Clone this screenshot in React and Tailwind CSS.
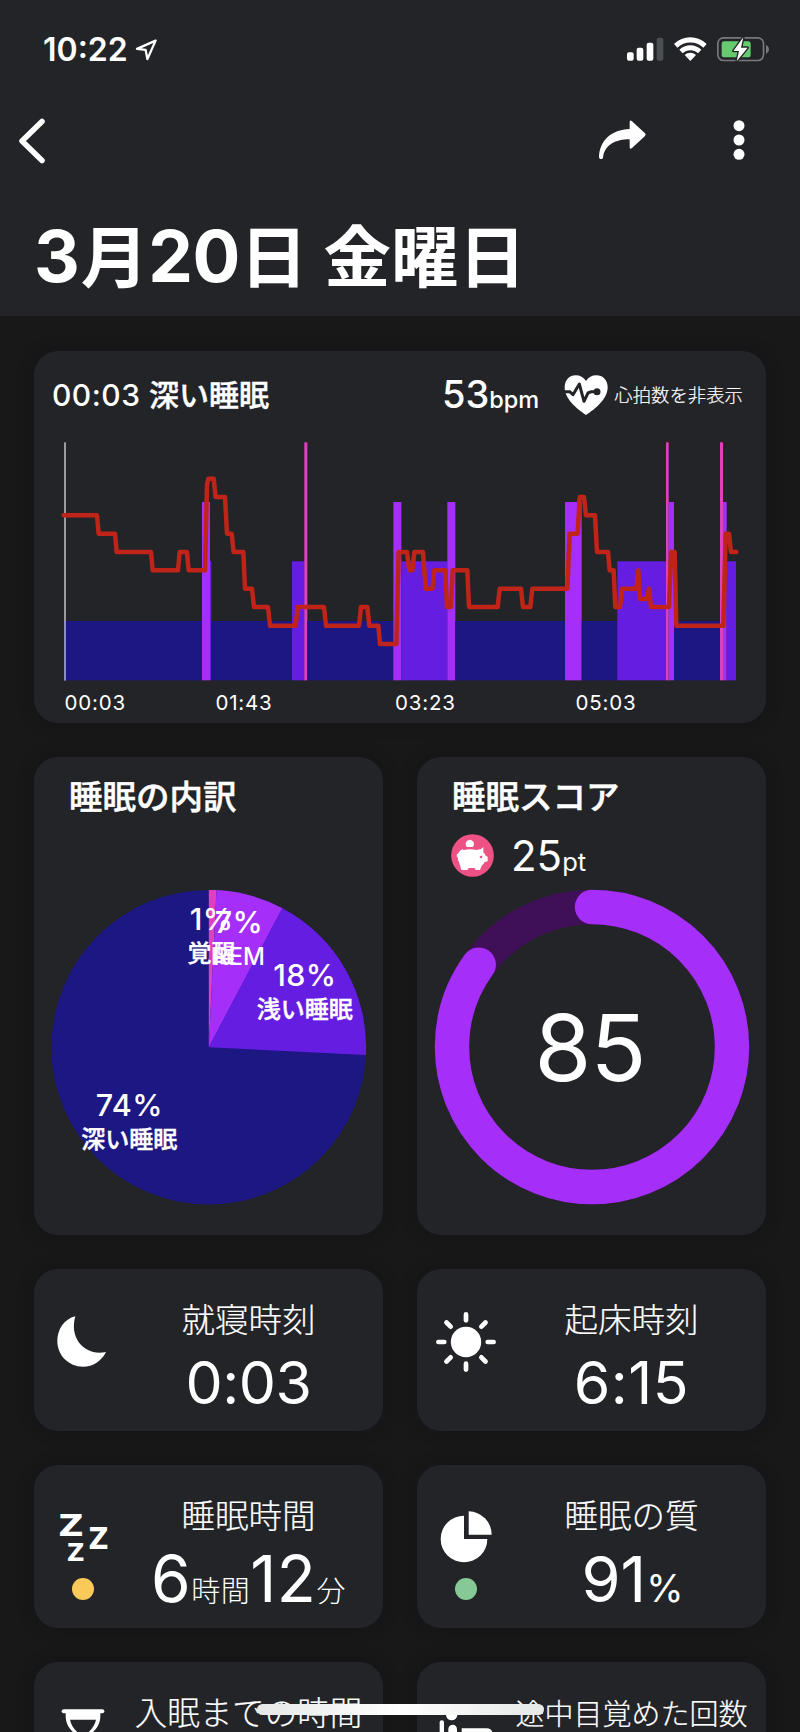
import React from "react";

const FONT = "font-['Inter','Noto_Sans_CJK_JP',sans-serif]";

/* Sleep stage bars: [x, width, stage]. Chart units are a third of a pixel. */
const STAGES = {
  deep: { top: 843, fill: "#1c1782" },
  light: { top: 664, fill: "#661de2" },
  rem: { top: 486, fill: "#a52ff8" },
  awake: { top: 307, fill: "#df40c0" },
};

const BARS = [
  [106, 410, "deep"], [516, 24, "rem"], [540, 4, "light"], [543, 243, "deep"],
  [786, 38, "light"], [823, 9, "awake"], [831, 259, "deep"], [1090, 24, "rem"],
  [1114, 138, "light"], [1252, 24, "rem"], [1275, 330, "deep"], [1605, 50, "rem"],
  [1655, 107, "deep"], [1762, 146, "light"], [1908, 8, "awake"], [1916, 16, "rem"],
  [1932, 138, "deep"], [2070, 9, "awake"], [2079, 11, "rem"], [2090, 28, "light"],
];

const HEART =
  "101,526 201,526 206,581 255,581 260,636 363,636 368,691 444,691 449,636 471,636 476,691 525,691 531,435 535,416 551,416 557,471 585,471 591,581 605,581 611,636 640,636 645,746 666,746 672,801 714,801 720,857 797,857 803,801 882,801 888,857 987,857 993,801 1012,801 1018,857 1045,857 1050,912 1099,912 1106,636 1131,636 1138,691 1147,691 1153,636 1179,636 1187,746 1207,746 1213,691 1246,691 1251,801 1263,801 1268,691 1312,691 1317,801 1403,801 1409,746 1473,746 1479,801 1501,801 1507,746 1612,746 1619,581 1643,581 1649,471 1662,471 1668,526 1695,526 1701,636 1734,636 1739,691 1751,691 1756,801 1770,801 1776,746 1819,746 1825,691 1830,777 1849,777 1857,746 1863,801 1917,801 1923,636 1934,636 1939,857 2080,857 2087,581 2097,581 2103,636 2119,636";

function LocationIcon() {
  return (
    <svg className="h-[24px] w-[24px]" viewBox="134 36 24 24" fill="none">
      <path d="M155.6 39.6 137 47.9l8.6.9 1.8 9.3Z" stroke="#fff" strokeWidth="2.3" strokeLinejoin="round" />
    </svg>
  );
}

function StatusIcons() {
  return (
    <svg className="h-[28px] w-[146px]" viewBox="196 44 438 84">
      <g fill="#fff">
        <rect x="202" y="96" width="20" height="25" rx="6" />
        <rect x="231" y="82" width="20" height="39" rx="6" />
        <rect x="261" y="67" width="20" height="54" rx="6" />
        <rect x="291" y="52" width="20" height="69" rx="6" fill="#4c4f52" />
        <path d="M343 71a70 70 0 0 1 98 0l-10 11a56 56 0 0 0-78 0Z" />
        <path d="M359 88a47 47 0 0 1 66 0l-10 11a33 33 0 0 0-46 0Z" />
        <path d="M375 104a25 25 0 0 1 34 0L392 122Z" />
      </g>
      <rect x="474.500" y="52.500" width="137" height="68" rx="17" fill="none" stroke="#77797c" strokeWidth="5" />
      <path d="M619 74a14 14 0 0 1 0 26Z" fill="#77797c" />
      <rect x="486" y="63" width="87" height="48" rx="8" fill="#66cb6f" />
      <path d="M551 51 521 92h17l-7 31 33-41h-20Z" fill="#fff" stroke="#232428" strokeWidth="8" strokeLinejoin="round" paintOrder="stroke" />
    </svg>
  );
}

function ShareIcon() {
  return (
    <svg className="h-[42px] w-[50px]" viewBox="112 298 150 126" fill="#fff">
      <path d="M207 308q0-9 7-3l39 36q4 4 0 8l-39 36q-7 6-7-3V359c-42 0-75 16-80 55-1 6-12 6-12-2 2-50 37-82 92-84Z" />
    </svg>
  );
}

function MoreIcon() {
  return (
    <svg className="h-[42px] w-[14px]" viewBox="516 298 42 126" fill="#fff">
      <circle cx="537" cy="318" r="16.500" />
      <circle cx="537" cy="361" r="16.500" />
      <circle cx="537" cy="404" r="16.500" />
    </svg>
  );
}

function HeartIcon() {
  return (
    <svg className="h-[42px] w-[44px]" viewBox="493 98 132 126">
      <path d="M559 221C530 202 495 172 495 138c0-22 15-36 33-36 13 0 24 6 31 17 7-11 18-17 31-17 19 0 34 14 34 36 0 34-36 65-65 83Z" fill="#fff" />
      <path d="M492 151h18l10 9 19-32 14 52 12-25 10-4h16" fill="none" stroke="#232428" strokeWidth="9" strokeLinejoin="round" />
      <circle cx="592" cy="151" r="10.500" fill="#232428" />
    </svg>
  );
}

function PiggyBadge() {
  return (
    <svg className="h-[43px] w-[43px]" viewBox="124 252 129 129">
      <circle cx="188.500" cy="316.500" r="64" fill="#ee5183" />
      <path d="M171 291q-6-9 0-17 10-9 19 0 6 8 0 17Z" fill="#fff" />
      <path d="M163 300q18-4 38 0l13-3 7-6v16q6 5 7 10l6 3v14l-9 2q-3 7-9 11l-5 13h-13l-3-6h-18l-3 6h-19l-6-21q-5-7-5-17l-3-3q-1-7 5-9 4-9 12-12Z" fill="#fff" />
      <circle cx="214" cy="321" r="4" fill="#ee5183" />
    </svg>
  );
}

function StageChart() {
  return (
    <svg className="block h-[243px] w-[732px]" viewBox="12 300 2196 729">
      {BARS.map(([x, w, stage]) => (
        <rect key={x} x={x} y={STAGES[stage].top} width={w} height={1021 - STAGES[stage].top} fill={STAGES[stage].fill} />
      ))}
      <rect x="102" y="307" width="6" height="714" fill="#9a9a9f" />
      <rect x="102" y="843" width="6" height="178" fill="#8f8bc4" />
      <polyline points={HEART} fill="none" stroke="#c02418" strokeWidth="13.500" strokeLinejoin="round" strokeLinecap="round" />
    </svg>
  );
}

function PieLabel({ x, y, value, name, stroke = 0.4 }) {
  return (
    <g fill="#fff" textAnchor="middle" fontWeight="500">
      <text x={x} y={y} fontSize="30.500" letterSpacing="0.300">{value}</text>
      <text x={x} y={y + 32} fontSize="24" stroke="#fff" strokeWidth={stroke}>{name}</text>
    </g>
  );
}

function StagePie() {
  const cx = 208.8;
  const cy = 1047.2;
  const r = 157.3;
  const at = (deg) => {
    const a = (deg * Math.PI) / 180;
    return `${cx + r * Math.sin(a)} ${cy - r * Math.cos(a)}`;
  };
  const slice = (from, to) => `M${cx} ${cy}L${at(from)}A${r} ${r} 0 0 1 ${at(to)}Z`;
  return (
    <svg className="mx-auto block h-[320px] w-[320px]" viewBox="49 887 320 320">
      <circle cx={cx} cy={cy} r={r} fill="#1c1782" />
      <path d={slice(0, 2.8)} fill="#df40c0" />
      <path d={slice(2.8, 27.9)} fill="#a52ff8" />
      <path d={slice(27.9, 92.8)} fill="#661de2" />
      <PieLabel x={129.3} y={1116.3} value="74%" name="深い睡眠" />
      <PieLabel x={304.8} y={985.5} value="18%" name="浅い睡眠" />
      <PieLabel x={239} y={933.3} value="7%" name="REM" stroke={0} />
      <PieLabel x={211.6} y={930.3} value="1%" name="覚醒" />
    </svg>
  );
}

function ScoreRing() {
  return (
    <svg className="mx-auto block h-[320px] w-[320px]" viewBox="0 0 320 320">
      <g fill="none" strokeWidth="34.400" transform="rotate(-90 160 160)">
        <circle cx="160" cy="160" r="140" stroke="#3f1058" />
        <circle cx="160" cy="160" r="140" stroke="#a52ff8" strokeLinecap="round" pathLength="100" strokeDasharray="85 100" />
      </g>
      <text x="158" y="194" fontSize="92" letterSpacing="-1" fill="#fff" textAnchor="middle">85</text>
    </svg>
  );
}

function MoonIcon() {
  return (
    <svg className="h-[54px] w-[54px]" viewBox="78 168 162 162">
      <path d="M136 172C102 180 82 212 82 246c0 43 34 77 77 77 30 0 56-17 69-44-60 14-112-38-92-107Z" fill="#fff" />
    </svg>
  );
}

function SunIcon() {
  return (
    <svg className="h-[64px] w-[64px]" viewBox="-32 -32 64 64">
      <circle r="15.200" fill="#fff" />
      {[0, 45, 90, 135, 180, 225, 270, 315].map((deg) => (
        <path key={deg} d="M0-21.700V-27.600" stroke="#fff" strokeWidth="4.700" strokeLinecap="round" transform={`rotate(${deg})`} />
      ))}
    </svg>
  );
}

function SleepIcon() {
  return (
    <svg className="h-[52px] w-[52px] overflow-visible font-['DejaVu_Sans',sans-serif]" viewBox="0 0 52 52" fill="#fff" fontWeight="700">
      <text x="1.500" y="24.800" fontSize="30" textLength="25" lengthAdjust="spacingAndGlyphs">Z</text>
      <text x="31.500" y="37.500" fontSize="30" textLength="20" lengthAdjust="spacingAndGlyphs">Z</text>
      <text x="10" y="50.200" fontSize="24">Z</text>
    </svg>
  );
}

function QualityIcon() {
  return (
    <svg className="h-[52px] w-[52px]" viewBox="91 187 156 156" fill="#fff">
      <path d="M163 201v70h70a70 70 0 1 1-70-70Z" />
      <path d="M177 188a70 70 0 0 1 69 70h-69Z" />
    </svg>
  );
}

function HourglassIcon() {
  return (
    <svg className="h-[52px] w-[44px]" viewBox="94 773 132 156" fill="#fff">
      <rect x="96" y="777" width="128" height="12" rx="6" />
      <rect x="96" y="917" width="128" height="12" rx="6" />
      <path d="M108 786h104v12c0 26-16 44-32 55 16 11 32 29 32 55v12H108v-12c0-26 16-44 32-55-16-11-32-29-32-55Z" />
      <path d="M121 808h78q-4 21-25 40h-28q-21-18-25-40Z" fill="#232428" />
    </svg>
  );
}

function BedIcon() {
  return (
    <svg className="h-[52px] w-[54px]" viewBox="84 778 162 156" fill="#fff">
      <circle cx="122" cy="798" r="17" />
      <rect x="86" y="815" width="13" height="100" rx="6" />
      <path d="M112 842a13 14 0 0 1 26 0v40h-26Z" />
      <path d="M152 839h75q17 0 17 17v26h-92Z" />
    </svg>
  );
}

function Card({ className = "", children }) {
  return (
    <section className={`rounded-[24px] bg-[#232428] shadow-[0_0_14px_rgba(18,14,24,0.55)] ${className}`}>{children}</section>
  );
}

function Tile({ icon, dot, label, labelClass = "text-[33.500px]", children }) {
  return (
    <Card className="flex h-[162.300px] pr-[18px]">
      <div className={`flex w-[98px] shrink-0 flex-col items-center ${dot ? "pt-[46px]" : "justify-center pb-[16px]"}`}>
        {icon}
        {dot && <span className={`mt-[15px] size-[21.500px] shrink-0 rounded-full ${dot}`} />}
      </div>
      <div className="flex w-[233px] flex-col items-center pt-[34px]">
        <div className={`h-[34px] font-light whitespace-nowrap leading-[34px] text-white [-webkit-text-stroke:0.2px] ${labelClass}`}>{label}</div>
        {children}
      </div>
    </Card>
  );
}

export default function App() {
  return (
    <div className={`relative h-[1732px] w-[800px] overflow-hidden bg-[#181818] text-white ${FONT}`}>
      <header className="h-[316px] bg-[#232428]">
        <div className="flex h-[98px] items-center pl-[43px] pr-[29px]">
          <span className="pt-[1px] text-[32px] font-semibold leading-none">10:22</span>
          <span className="ml-[6px]"><LocationIcon /></span>
          <span className="ml-auto"><StatusIcons /></span>
        </div>
        <div className="flex h-[86px] items-center pl-[16px] pr-[54px]">
          <svg className="h-[48px] w-[32px]" viewBox="0 0 32 48" fill="none">
            <path d="M26 4.500 6 24l20 19.500" stroke="#fff" strokeWidth="5.500" strokeLinecap="round" strokeLinejoin="round" />
          </svg>
          <span className="ml-auto pb-[2px]"><ShareIcon /></span>
          <span className="ml-[84px] pb-[2px]"><MoreIcon /></span>
        </div>
        <h1 className="mt-[36px] pl-[34px] text-[67.500px] font-bold leading-[72px] whitespace-nowrap"><span className="text-[71px] tracking-[1px]">3</span>月<span className="text-[71px] tracking-[-0.500px]">20</span>日 金曜日</h1>
      </header>

      <main className="flex flex-col gap-[34px] px-[34px] pt-[34.500px]">
        <Card className="h-[372.500px] overflow-hidden">
          <div className="flex h-[89.500px] items-center pl-[18px] pr-[23px]">
            <span className="text-[30px] font-medium leading-none whitespace-nowrap"><span className="tracking-[0.500px]">00:03 </span><span className="[-webkit-text-stroke:0.4px]">深い睡眠</span></span>
            <span className="ml-auto flex items-baseline pb-[2px] leading-none font-medium">
              <span className="text-[38px]">53</span>
              <span className="text-[23.500px]">bpm</span>
            </span>
            <span className="ml-[25px]"><HeartIcon /></span>
            <span className="ml-[6px] text-[18.400px] font-light leading-none whitespace-nowrap [-webkit-text-stroke:0.2px]">心拍数を非表示</span>
          </div>
          <StageChart />
          <div className="flex pl-[30.500px] pt-[10px] text-[20.500px] leading-[20px] tracking-[0.800px]">
            <span className="w-[151px]">00:03</span>
            <span className="w-[179.500px]">01:43</span>
            <span className="w-[180.500px]">03:23</span>
            <span>05:03</span>
          </div>
        </Card>

        <div className="grid grid-cols-2 gap-[34px]">
          <Card className="h-[478px] pt-[23px]">
            <h2 className="h-[107px] pl-[35px] text-[33.500px] font-medium leading-[34px] [-webkit-text-stroke:0.5px]">睡眠の内訳</h2>
            <StagePie />
          </Card>
          <Card className="h-[478px] pt-[23px]">
            <h2 className="h-[34px] pl-[35px] text-[33.500px] font-medium leading-[34px] [-webkit-text-stroke:0.5px]">睡眠スコア</h2>
            <div className="flex h-[73px] items-start pl-[34px] pt-[20px]">
              <PiggyBadge />
              <span className="ml-[17px] flex items-baseline pt-[1px] leading-[42px]">
                <span className="text-[42px]">25</span>
                <span className="text-[25.500px]">pt</span>
              </span>
            </div>
            <ScoreRing />
          </Card>
        </div>

        <div className="grid grid-cols-2 gap-[34px]">
          <Tile icon={<MoonIcon />} label="就寝時刻">
            <div className="mt-[16px] text-[59px] leading-[60px] tracking-[-0.500px]">0:03</div>
          </Tile>
          <Tile icon={<SunIcon />} label="起床時刻">
            <div className="mt-[16px] text-[59px] leading-[60px] tracking-[0.500px]">6:15</div>
          </Tile>
          <Tile icon={<SleepIcon />} dot="bg-[#f9ca59]" label="睡眠時間">
            <div className="mt-[16px] flex items-baseline text-[64px] leading-[60px] tracking-[0.500px]">
              6<span className="text-[29px] font-light">時間</span>12<span className="text-[29px] font-light">分</span>
            </div>
          </Tile>
          <Tile icon={<QualityIcon />} dot="bg-[#86c997]" label="睡眠の質">
            <div className="mt-[16px] flex items-baseline pl-[2px] text-[63px] leading-[60px]">
              91<span className="text-[38px]">%</span>
            </div>
          </Tile>
          <Tile icon={<HourglassIcon />} dot="bg-[#86c997]" label="入眠までの時間" labelClass="pt-[1px] text-[32.500px]" />
          <Tile icon={<BedIcon />} dot="bg-[#86c997]" label="途中目覚めた回数" labelClass="pt-[2px] text-[29px]" />
        </div>
      </main>

      <div className="absolute left-[257px] top-[1704px] h-[11px] w-[287px] rounded-full bg-linear-to-r from-[#e6e7e7] via-white to-[#e6e7e7]" />
    </div>
  );
}
